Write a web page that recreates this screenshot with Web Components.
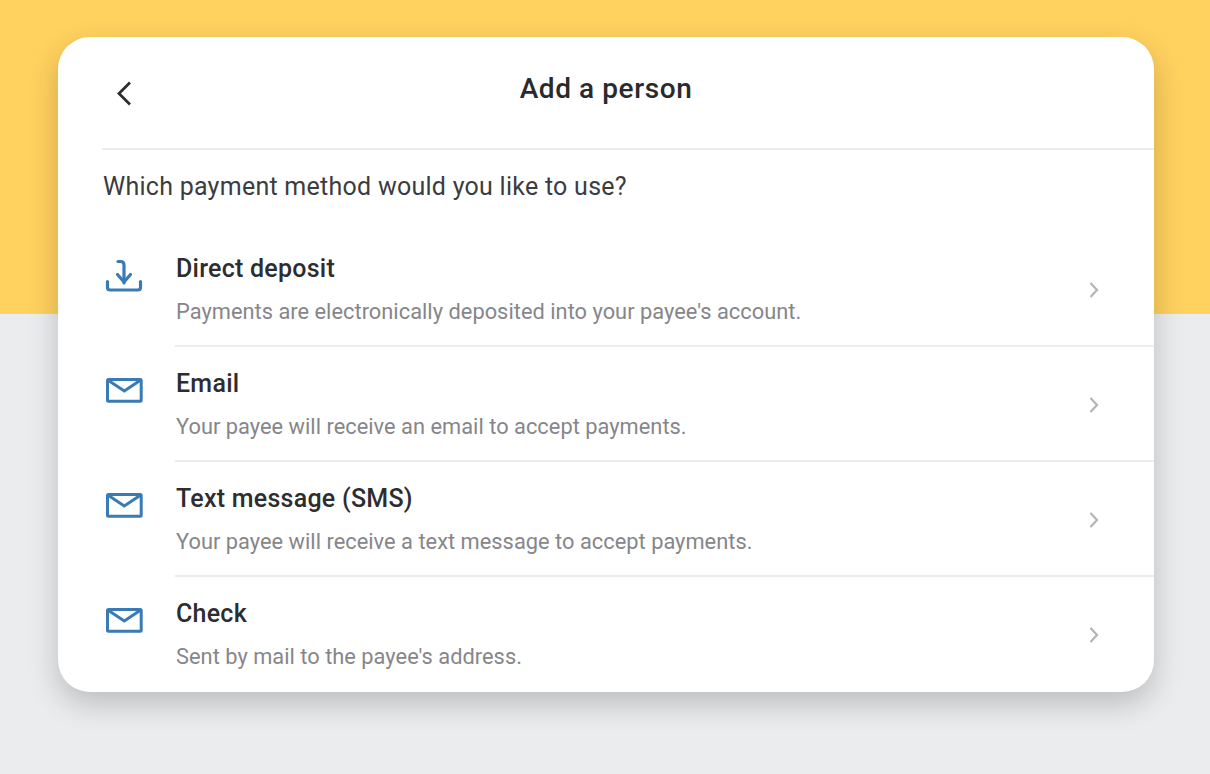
<!DOCTYPE html>
<html lang="en"><head><meta charset="utf-8"><title>Add a person</title>
<style>html,body{margin:0;padding:0;height:100%}body{font-family:Roboto,"Liberation Sans",sans-serif}</style>
</head><body>
<payee-page>
  <payee-card heading="Add a person" question="Which payment method would you like to use?">
    <method-row icon="download" label="Direct deposit" desc="Payments are electronically deposited into your payee's account."></method-row>
    <method-row icon="mail" label="Email" desc="Your payee will receive an email to accept payments."></method-row>
    <method-row icon="mail" label="Text message (SMS)" desc="Your payee will receive a text message to accept payments."></method-row>
    <method-row icon="mail" label="Check" desc="Sent by mail to the payee's address." last></method-row>
  </payee-card>
</payee-page>
<script>
class PayeePage extends HTMLElement{constructor(){super();this.attachShadow({mode:'open'}).innerHTML=`<style>
:host{display:block;box-sizing:border-box;width:100%;height:774px;overflow:hidden;padding:37px 56px 0 58px;background:linear-gradient(#ffd15f 0,#ffd15f 314px,#ebecee 314px,#ebecee 100%)}
</style><slot></slot>`}}
class PayeeCard extends HTMLElement{constructor(){super();const r=this.attachShadow({mode:'open'});r.innerHTML=`<style>
:host{display:block;height:655px;box-sizing:border-box;background:#fff;border-radius:32px;box-shadow:0 12px 30px rgba(0,0,0,.2);padding-left:44px;overflow:hidden;color:#2d2d2f}
.bar{height:113px;border-bottom:2px solid #ececec;box-sizing:border-box;display:flex;align-items:flex-start;position:relative;justify-content:center}
.back{position:absolute;left:9px;top:41px;width:24px;height:30px;display:block}
h1{margin:34px 44px 0 0;font:500 28px/36px Roboto,sans-serif;letter-spacing:.58px;color:#2a2a2c}
p{margin:0;padding:21px 0 0 1px;height:82px;box-sizing:border-box;font:400 25px/32px Roboto,sans-serif;letter-spacing:.26px;color:#3c3c40}
</style>
<div class="bar"><svg class="back" viewBox="0 0 24 30" aria-hidden="true"><path d="M19 4.500 8 15.500l11 11" fill="none" stroke="#2d2d2f" stroke-width="2.800"/></svg><h1></h1></div>
<p></p><slot></slot>`;
r.querySelector('h1').textContent=this.getAttribute('heading');r.querySelector('p').textContent=this.getAttribute('question')}}
const C='#3a7ab5';
const ICONS={download:`<g fill="none" stroke="${C}" stroke-width="3.200" stroke-linecap="round" stroke-linejoin="round"><path d="M13 6.500h2.500c2.300 0 3.500 1.300 3.500 3.500V28"/><path d="M12.500 19.500l6.500 7.500 6.500-7.500" /><path d="M2.500 26.500v6c0 1.600.9 2.500 2.500 2.500h28c1.600 0 2.500-.9 2.500-2.500v-6"/></g>`,
mail:`<g fill="none" stroke="${C}" stroke-width="3"><rect x="2.500" y="9.500" width="33.700" height="21.700" rx="1"/><path d="M3.500 10.500 19.300 21 35 10.500"/></g>`};
class MethodRow extends HTMLElement{constructor(){super();const r=this.attachShadow({mode:'open'});const last=this.hasAttribute('last');r.innerHTML=`<style>
:host{display:grid;grid-template-columns:73px 1fr;height:115px}
svg.i{width:38px;height:38px;margin:23px 0 0 3px;display:block;overflow:visible}
.main{display:flex;justify-content:space-between;align-items:center;${last?'padding-bottom:2px;':'border-bottom:2px solid #ececec;'}box-sizing:border-box;padding-top:3px;padding-left:1px;padding-right:53px}
.t{font:500 25px/32px Roboto,sans-serif;letter-spacing:.25px;color:#2d2d2f;margin-top:-1px}
.d{font:400 21.800px/30px Roboto,sans-serif;letter-spacing:.03px;color:#86868a;margin-top:12px}
.c{width:14px;height:20px;display:block}
</style>
<svg class="i" viewBox="0 0 38 38" aria-hidden="true">${ICONS[this.getAttribute('icon')]}</svg>
<div class="main"><div><div class="t"></div><div class="d"></div></div>
<svg class="c" viewBox="0 0 14 20" aria-hidden="true"><path d="M3.500 3l6.500 7-6.500 7" fill="none" stroke="#b4b4b6" stroke-width="2.200"/></svg></div>`;
r.querySelector('.t').textContent=this.getAttribute('label');r.querySelector('.d').textContent=this.getAttribute('desc')}}
customElements.define('payee-page',PayeePage);customElements.define('payee-card',PayeeCard);customElements.define('method-row',MethodRow);
</script></body></html>
